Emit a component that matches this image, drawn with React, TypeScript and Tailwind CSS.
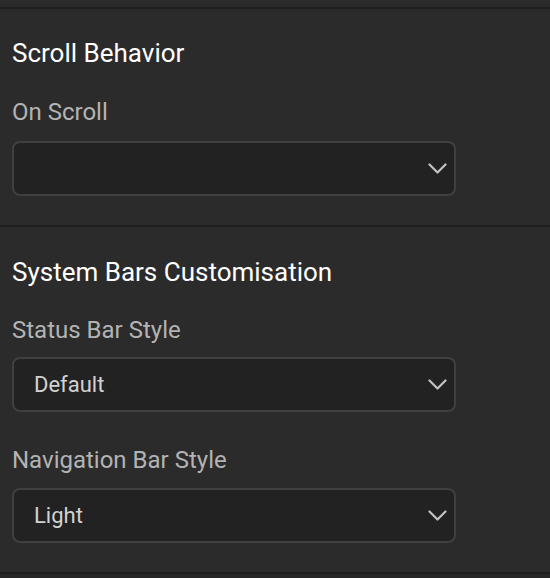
function Select({ value }: { value?: string }) {
  return (
    <div className="flex h-[55px] w-[444px] items-center justify-between rounded-lg border-2 border-[#404040] bg-[#222222] pl-5 pr-[7px]">
      <span className="text-[22px] leading-8 text-[#d2d2d2]">{value}</span>
      <svg width="19" height="11" viewBox="0 0 19 11" fill="none" className="text-[#c4c4c4]">
        <polyline points="1.5,1.5 9.5,9.5 17.5,1.5" stroke="currentColor" strokeWidth="2.2" strokeLinecap="round" strokeLinejoin="round" />
      </svg>
    </div>
  );
}

function Divider() {
  return <div className="h-[2px] bg-[#1e1e1e]" />;
}

export default function App() {
  return (
    <div
      className="h-[578px] w-[550px] overflow-hidden bg-[#2b2b2b]"
      style={{ fontFamily: "Roboto, 'Noto Sans', sans-serif" }}
    >
      <div className="h-[7px]" />
      <Divider />

      <section className="px-3 pt-[28px] pb-[29px]">
        <h2 className="text-[26px] font-normal leading-8 text-white">Scroll Behavior</h2>
        <div className="mt-[27px] text-[24px] leading-8 text-[#b3b3b3]">On Scroll</div>
        <div className="mt-[13px]">
          <Select />
        </div>
      </section>
      <Divider />

      <section className="px-3 pt-[29px] pb-[29px]">
        <h2 className="text-[26px] font-normal leading-8 text-white">System Bars Customisation</h2>
        <div className="mt-[26px] text-[24px] leading-8 text-[#b3b3b3]">Status Bar Style</div>
        <div className="mt-[11px]">
          <Select value="Default" />
        </div>
        <div className="mt-[32px] text-[24px] leading-8 text-[#b3b3b3]">Navigation Bar Style</div>
        <div className="mt-3">
          <Select value="Light" />
        </div>
      </section>
      <Divider />
      <div className="h-full bg-[#272727]" />
    </div>
  );
}
